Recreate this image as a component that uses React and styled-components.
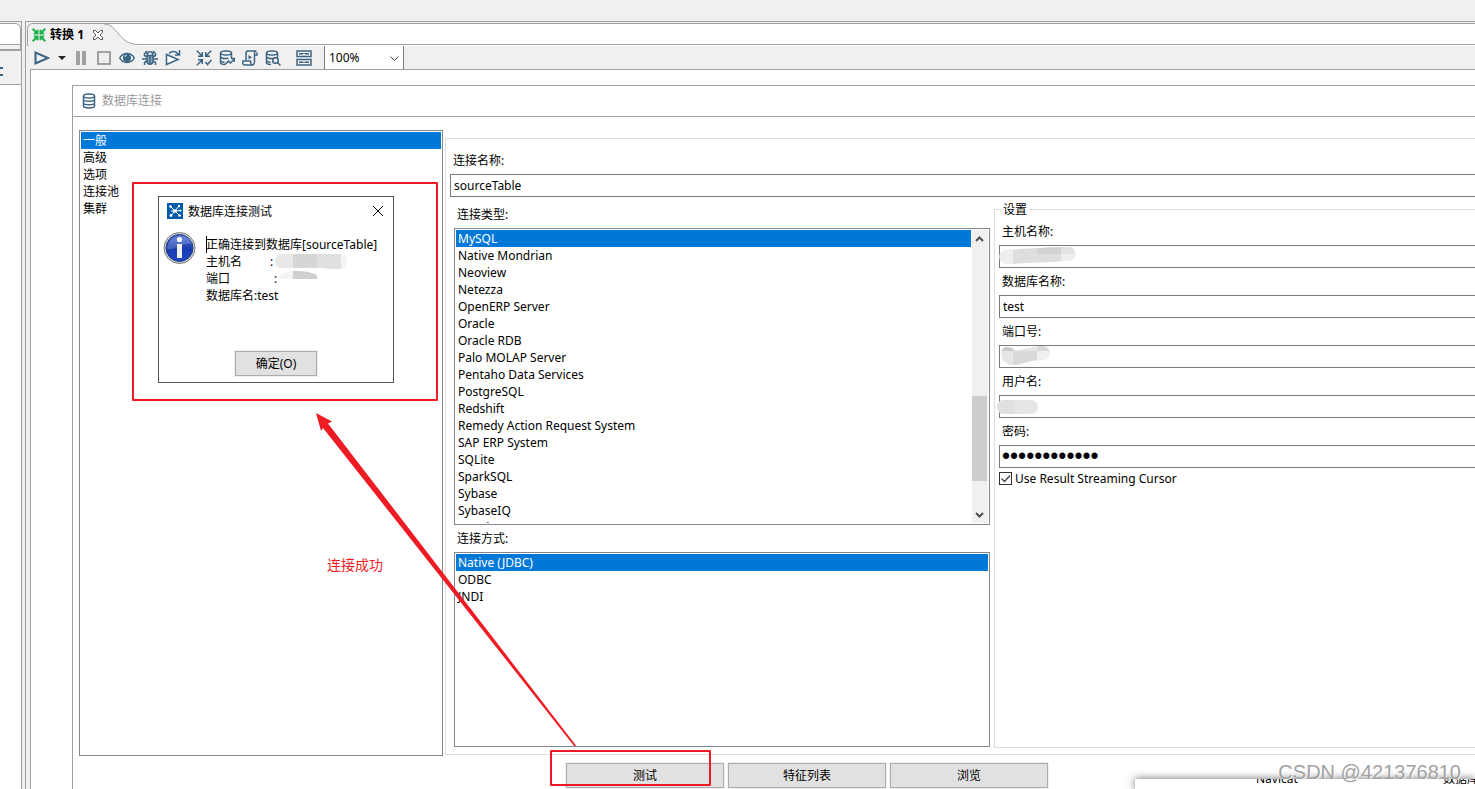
import React from 'react';
import styled, { createGlobalStyle } from 'styled-components';

const line = '#a0a0a0';
const frame = '#828790';
const ink = '#3b6482';
const red = '#ed1c24';

const Global = createGlobalStyle`
  * { box-sizing: border-box; }
  body {
    margin: 0;
    background: #fff;
    color: #000;
    overflow: hidden;
    font: 12px/17px "Noto Sans", "Noto Sans CJK SC", sans-serif;
  }
  button, input, select { font: inherit; color: inherit; }
`;

const Page = styled.div`
  position: relative;
  display: flex;
  flex-direction: column;
  height: 100vh;
  overflow: hidden;
`;
const TopStrip = styled.div`
  flex: 0 0 21px;
  background: #f0f0f0;
`;
const Workbench = styled.div`
  flex: 1;
  min-height: 0;
  display: flex;
  gap: 3px;
  background: #f0f0f0;
`;
const SidePane = styled.aside`
  flex: 0 0 22px;
  display: flex;
  flex-direction: column;
  border: solid ${line};
  border-width: 1px 1px 0 0;
`;
const SideTab = styled.div`
  height: 22px;
  margin: 1px 0 0;
  background: #fff;
  border: solid ${line};
  border-width: 1px 1px 1px 0;
  border-top-right-radius: 6px;
`;
const SideRule = styled.div`
  height: 6px;
  border: solid ${line};
  border-width: 0 1px 2px 0;
`;
const SideTools = styled.div`
  height: 34px;
  padding-top: 12px;
  border-bottom: 1px solid ${line};
`;
const SideBody = styled.div`
  flex: 1;
  background: #fff;
`;
const Editor = styled.main`
  flex: 1;
  min-width: 0;
  display: flex;
  flex-direction: column;
  border: solid ${line};
  border-width: 1px 0 0 1px;
`;
const TabBar = styled.div`
  display: flex;
  height: 23px;
  margin: 1px 0 0 1px;
  background: #fff;
  border: solid ${line};
  border-width: 1px 0 0 1px;
  border-top-left-radius: 6px;
`;
const Tab = styled.div`
  display: flex;
  align-items: center;
  width: 76px;
  padding: 0 0 1px 4px;
  gap: 4px;
  background: #f0f0f0;
  font-weight: bold;
  white-space: nowrap;
  border-top-left-radius: 6px;
`;
const TabCurve = styled.svg`
  flex: 0 0 34px;
  height: 22px;
`;
const TabRest = styled.div`
  flex: 1;
  height: 21px;
  border-bottom: 1px solid ${line};
`;
const CloseTab = styled.button`
  display: flex;
  border: 0;
  padding: 0;
  margin-left: 4px;
  background: none;
`;
const Toolbar = styled.div`
  display: flex;
  align-items: center;
  height: 23px;
  padding-left: 8px;
  gap: 7px;
`;
const ToolGroup = styled.div`
  display: flex;
  align-items: center;
  gap: 7px;
  margin-right: 8px;
`;
const ToolButton = styled.button`
  display: flex;
  padding: 0;
  border: 0;
  background: none;
`;
const ZoomBox = styled.div`
  position: relative;
  width: 80px;
  height: 23px;
  margin-left: -3px;
  border: solid #7a7a7a;
  border-width: 0 1px;
  background: #fff;
`;
const ZoomSelect = styled.select`
  appearance: none;
  width: 100%;
  height: 100%;
  padding: 0 4px;
  border: 0;
  outline: 0;
  background: none;
`;
const ZoomArrow = styled.svg`
  position: absolute;
  right: 4px;
  top: 10px;
  pointer-events: none;
`;
const Canvas = styled.div`
  flex: 1;
  min-height: 0;
  display: flex;
  margin-left: 4px;
  padding: 15px 0 0 41px;
  border: solid ${line};
  border-width: 1px 0 0 1px;
  background: #fff;
`;
const Dialog = styled.section`
  flex: 1;
  min-width: 0;
  display: flex;
  flex-direction: column;
  border: solid ${line};
  border-width: 1px 0 0 1px;
`;
const DialogTitle = styled.header`
  display: flex;
  align-items: center;
  gap: 5px;
  height: 31px;
  padding: 0 0 1px 8px;
  border-bottom: 1px solid ${line};
  color: #999;
`;
const DialogBody = styled.div`
  flex: 1;
  min-height: 0;
  display: flex;
  gap: 2px;
  padding: 13px 0 0 6px;
`;
const ListFrame = styled.div`
  display: flex;
  flex: ${(p) => p.$flex || '1'};
  min-height: 0;
  padding: 1px;
  border: 1px solid ${frame};
  background: #fff;
  overflow: hidden;
`;
const List = styled.ul`
  flex: 1;
  margin: 0;
  padding: 0;
  list-style: none;
  overflow: hidden;
`;
const Item = styled.li`
  height: 17px;
  padding-left: 2px;
  white-space: nowrap;
  background: ${(p) => (p.$selected ? '#0078d7' : 'transparent')};
  color: ${(p) => (p.$selected ? '#fff' : '#000')};
`;
const ScrollBar = styled.div`
  flex: 0 0 16px;
  margin-left: 1px;
  display: flex;
  flex-direction: column;
  align-items: center;
  justify-content: space-between;
  background: #f0f0f0;
`;
const Track = styled.div`
  flex: 1;
  width: 100%;
  padding-top: 149px;
`;
const Thumb = styled.div`
  width: 15px;
  height: 85px;
  background: #cdcdcd;
`;
const ArrowCap = styled.svg`
  flex: 0 0 17px;
  width: 15px;
  align-self: flex-start;
`;
const Panel = styled.div`
  flex: 1;
  min-width: 0;
  display: flex;
  flex-direction: column;
  margin: 8px 0 1px;
  padding: 13px 0 6px 4px;
  border: solid #dcdcdc;
  border-width: 1px 0 1px 1px;
`;
const Label = styled.label`
  display: block;
  flex: 0 0 17px;
  padding-left: 3px;
  margin-bottom: 5px;
`;
const TextInput = styled.input`
  display: block;
  width: 100%;
  height: 23px;
  padding: 0 3px;
  border: 1px solid #7a7a7a;
  border-right: 0;
  border-radius: 0;
  outline: 0;
  background: #fff;
`;
const PasswordInput = styled(TextInput)`
  font-family: "Liberation Sans", Arial, sans-serif;
  font-size: 23px;
  padding: 0 2px;
`;
const Columns = styled.div`
  flex: 1;
  min-height: 0;
  display: flex;
  gap: 4px;
  padding-left: 4px;
`;
const TypeColumn = styled.div`
  flex: 0 0 536px;
  display: flex;
  flex-direction: column;
  padding-top: 9px;
  margin-bottom: 1px;
`;
const SecondLabel = styled(Label)`
  margin-top: 5px;
`;
const Settings = styled.fieldset`
  flex: 1;
  min-width: 0;
  margin: 4px 0 0;
  padding: 5px 0 0 4px;
  border: 1px solid #dcdcdc;
  border-right: 0;
`;
const Legend = styled.legend`
  height: 17px;
  margin-left: 2px;
  padding: 0 2px;
`;
const Field = styled.div`
  position: relative;
  margin-bottom: 5px;
`;
const Smudge = styled.svg`
  position: absolute;
  left: -2px;
  bottom: 0;
`;
const CheckRow = styled.label`
  display: flex;
  align-items: center;
  gap: 3px;
  height: 17px;
  margin-top: -3px;
`;
const CheckBox = styled.span`
  display: flex;
  position: relative;
`;
const Check = styled.input`
  appearance: none;
  width: 13px;
  height: 13px;
  margin: 0;
  border: 1px solid #333;
  background: #fff;
  &:not(:checked) + svg { display: none; }
`;
const CheckMark = styled.svg`
  position: absolute;
  left: 0;
  top: 0;
  pointer-events: none;
`;
const ButtonRow = styled.footer`
  display: flex;
  gap: 4px;
  padding: 7px 0 1px 493px;
`;
const PushButton = styled.button`
  width: ${(p) => p.$width || 158}px;
  height: 25px;
  padding: 0;
  border: 1px solid #adadad;
  background: #e1e1e1;
  box-shadow: 0 0 0 1px #f0f0f0;
`;

const MessageBox = styled.section`
  position: absolute;
  left: 158px;
  top: 196px;
  width: 236px;
  height: 187px;
  display: flex;
  flex-direction: column;
  align-items: center;
  border: 1px solid #555;
  background: #fff;
`;
const MessageTitle = styled.header`
  align-self: stretch;
  display: flex;
  align-items: center;
  gap: 5px;
  height: 28px;
  padding: 0 9px 0 8px;
`;
const CloseBox = styled.button`
  display: flex;
  margin-left: auto;
  padding: 0;
  border: 0;
  background: none;
`;
const MessageBody = styled.div`
  align-self: stretch;
  flex: 1;
  display: flex;
  gap: 10px;
  padding: 7px 0 0 4px;
`;
const MessageText = styled.div`
  padding-top: 4px;
  white-space: nowrap;
`;
const Row = styled.div`
  position: relative;
  display: flex;
  height: 17px;
`;
const Caret = styled.i`
  position: absolute;
  left: 0;
  top: 0;
  width: 1px;
  height: 17px;
  background: #000;
`;
const Key = styled.span`
  width: ${(p) => p.$width}px;
`;
const MessageActions = styled.div`
  padding-bottom: 6px;
`;
const Mark = styled.div`
  position: absolute;
  left: ${(p) => p.$x}px;
  top: ${(p) => p.$y}px;
  width: ${(p) => p.$w}px;
  height: ${(p) => p.$h}px;
  border: 2px solid ${red};
  border-radius: 1px;
  pointer-events: none;
`;
const Arrow = styled.svg`
  position: absolute;
  left: 310px;
  top: 405px;
  pointer-events: none;
`;
const Note = styled.div`
  position: absolute;
  left: 327px;
  top: 556px;
  font-size: 14px;
  color: ${red};
`;
const Popup = styled.div`
  position: absolute;
  left: 1135px;
  right: 0;
  bottom: 0;
  height: 10px;
  background: #fff;
  box-shadow: 0 0 8px rgba(0, 0, 0, 0.6);
`;
const PopupRow = styled.div`
  display: flex;
  justify-content: space-between;
  height: 10px;
  padding-left: 121px;
  overflow: hidden;
  line-height: 0;
  white-space: nowrap;
`;
const PopupText = styled.span`
  width: ${(p) => p.$width || 'auto'};
`;
const Watermark = styled.div`
  position: absolute;
  right: 14px;
  bottom: 5px;
  font: 20px/24px "Liberation Sans", Arial, sans-serif;
  color: #a2a2a2;
  text-shadow: 1px 1px 0 rgba(255, 255, 255, 0.7);
`;

function Icon({ children, width = 16, stroke = ink, sw = 1.5 }) {
  return (
    <svg width={width} height="16" viewBox={`0 0 ${width} 16`} fill="none" stroke={stroke} strokeWidth={sw}>
      {children}
    </svg>
  );
}
const Converge = ({ d }) => (
  <>
    <path d="M2 6.300h4.300V2M6.300 6.300L.8.8M9.700 2v4.300H14M9.700 6.300L15.200.8M2 9.700h4.300V14M6.300 9.700L.8 15.200" />
    <path d={d} />
  </>
);
const Cylinder = ({ open }) => (
  <>
    <ellipse cx="7" cy="3" rx="5.500" ry="2" />
    <path d={open ? 'M1.500 3v9.500c0 1.200 2 2 4.500 2M12.500 3v5M1.500 7c1 1.500 5 2 8 1.300M1.500 11c1 1 2.500 1.300 4 1.500' : 'M1.500 3v10c0 2.500 11 2.500 11 0V3M1.500 6.500c0 2.300 11 2.300 11 0M1.500 10c0 2.300 11 2.300 11 0'} />
  </>
);

const run = [
  ['运行', <Icon sw={2}><path d="M1.500 2.500v11L14 8z" /></Icon>],
  ['运行选项', <Icon width={9} stroke="none"><path d="M1 6h8L5 10z" fill="#222" /></Icon>],
  ['暂停', <Icon stroke="none"><path d="M3 1h4v14H3zM9 1h4v14H9z" fill={line} /></Icon>],
  ['停止', <Icon stroke={line} sw={2}><path d="M2 2h12v12H2z" /></Icon>],
  ['预览', <Icon sw={1.5}><path d="M.7 8C4 2 12 2 15.300 8 12 14 4 14 .7 8z" fill="#fff" /><circle cx="8" cy="8" r="4.200" fill={ink} stroke="none" /><path d="M6 7a2 2 0 0 1 2-2" stroke="#cfdce5" strokeWidth="1" /></Icon>],
  ['调试', <Icon><path d="M5 5.500h6v5c0 5-6 5-6 0z" fill="#8ba3b5" /><path d="M8 5.500v8M5.500 5V3.500C6 1 10 1 10.500 3.500V5M5 1L3.500 2.500 5.500 4M11 1l1.500 1.500L10.500 4M5 7L2.500 5.500V3M5 9H0M5 11l-2.500 1.500V15M11 7l2.500-1.500V3M11 9h5M11 11l2.500 1.500V15" /></Icon>],
  ['重放', <Icon><path d="M1.500 4.500v10L13 9.500z" fill="#fff" /><path d="M4 3.500C7 .5 11 1 13.500 4.500M14.500 0v5H10" /></Icon>],
];
const tools = [
  ['校验', <Icon><Converge d="M9.500 12l2 2.500L15.500 10" /></Icon>],
  ['影响分析', <Icon><Cylinder open /><path d="M6 14.500l3.500-3.500 2 2L15.500 9M12 8.500h3.500V12" /></Icon>],
  ['SQL', <Icon><path d="M4 10V3.500C4 1 5 1 6 1h8.500c-2 0-2 1-2 3v7c0 3-1 4-2.500 4H2.500C1 15 .5 13 1 11h7.500c0 2.500.5 4 2 4M12.500 5H15V2.500" /><path d="M6.500 5v4.500L10 7.200z" fill={ink} stroke="none" /></Icon>],
  ['浏览数据库', <Icon><Cylinder open /><circle cx="10.500" cy="10.500" r="2.800" /><path d="M12.500 12.500l3 3" /></Icon>],
];

const types = ['MySQL', 'Native Mondrian', 'Neoview', 'Netezza', 'OpenERP Server', 'Oracle', 'Oracle RDB', 'Palo MOLAP Server', 'Pentaho Data Services', 'PostgreSQL', 'Redshift', 'Remedy Action Request System', 'SAP ERP System', 'SQLite', 'SparkSQL', 'Sybase', 'SybaseIQ', 'Teradata'];

function ListBox({ items, label, flex, scroll }) {
  return (
    <ListFrame $flex={flex}>
      <List role="listbox" aria-label={label}>
        {items.map((t, i) => (
          <Item key={t} role="option" aria-selected={i === 0} $selected={i === 0}>{t}</Item>
        ))}
      </List>
      {scroll && (
        <ScrollBar>
          <ArrowCap viewBox="0 0 15 17" fill="none" stroke="#505050" strokeWidth="2"><path d="M4 11l3.500-3.500L11 11" /></ArrowCap>
          <Track><Thumb /></Track>
          <ArrowCap viewBox="0 0 15 17" fill="none" stroke="#505050" strokeWidth="2"><path d="M4 7l3.500 3.500L11 7" /></ArrowCap>
        </ScrollBar>
      )}
    </ListFrame>
  );
}

const hostSmudge = (
  <Smudge width="80" height="23">
    <clipPath id="hostShape"><path d="M8 5C20 4 60 2 71 2c10 0 10 14 0 14C58 17 25 18 10 19 0 19 0 6 8 5z" /></clipPath>
    <g clipPath="url(#hostShape)">
      <path fill="#eee" d="M0 0h80v20H0z" /><path fill="#dedede" d="M16 0h48v20H16z" />
      <path fill="#d2d2d2" d="M40 0h24v9H40z" /><path fill="#e2e2e2" d="M64 0h16v9H64z" />
    </g>
  </Smudge>
);
const portSmudge = (
  <Smudge width="60" height="23">
    <clipPath id="portShape"><path d="M10 2c5 0 8 4 12 3 8-1 14-4 23-4 10 0 11 14 0 14-7 0-12 1-18 3-6 2-12 3-16 1C2 16 2 2 10 2z" /></clipPath>
    <g clipPath="url(#portShape)">
      <path fill="#e6e6e6" d="M0 0h60v23H0z" /><path fill="#c8c8c8" d="M0 0h16v6H0z" />
      <path fill="#d9d9d9" d="M16 6h24v17H16z" /><path fill="#d8dbdb" d="M40 0h20v6H40z" /><path fill="#efefef" d="M40 6h20v17H40z" />
    </g>
  </Smudge>
);
const userSmudge = (
  <Smudge width="44" height="23">
    <rect x="0" y="5" width="41" height="14" rx="7" fill="#e6e6e6" /><path fill="#e1e0df" d="M7 5h10v14H7C-2 19-2 5 7 5z" />
  </Smudge>
);

const fields = [
  ['host', '主机名称:', '', hostSmudge],
  ['db', '数据库名称:', 'test'],
  ['port', '端口号:', '', portSmudge],
  ['user', '用户名:', '', userSmudge],
];

export default function App() {
  return (
    <Page>
      <Global />
      <TopStrip />
      <Workbench>
        <SidePane>
          <SideTab />
          <SideRule />
          <SideTools>
            <svg width="4" height="10" fill="none" stroke={ink} strokeWidth="2"><path d="M0 2h3M0 9h3" /></svg>
          </SideTools>
          <SideBody />
        </SidePane>
        <Editor>
          <TabBar>
            <Tab>
              <Icon stroke="#1fb14c" sw={2.3}><Converge d="M14 9.700H9.700V14M9.700 9.700L15.200 15.200" /></Icon>
              转换 1
              <CloseTab aria-label="关闭">
                <svg width="12" height="12" viewBox="0 0 12 12" fill="#fff" stroke="#555"><path d="M1.500 1.500h2L6 4l2.500-2.500h2v2L8 6l2.500 2.500v2h-2L6 8l-2.500 2.500h-2v-2L4 6 1.500 3.500z" /></svg>
              </CloseTab>
            </Tab>
            <TabCurve viewBox="0 0 34 22">
              <path d="M0 0C14 0 14 20 34 20.500V22H0z" fill="#f0f0f0" />
              <path d="M0 0C14 0 14 20 34 20.500" fill="none" stroke={line} />
            </TabCurve>
            <TabRest />
          </TabBar>
          <Toolbar>
            <ToolGroup>{run.map(([n, i]) => <ToolButton key={n} aria-label={n}>{i}</ToolButton>)}</ToolGroup>
            <ToolGroup>{tools.map(([n, i]) => <ToolButton key={n} aria-label={n}>{i}</ToolButton>)}</ToolGroup>
            <ToolGroup>
              <ToolButton aria-label="显示结果">
                <Icon width={16}><path d="M1 1h14v5.500H1zM1 9.500h14V15H1zM3 3.700h4.500M8.500 3.700H13M3 12.300h4.500M8.500 12.300H13" /></Icon>
              </ToolButton>
            </ToolGroup>
            <ZoomBox>
              <ZoomSelect aria-label="缩放" defaultValue="100%"><option>100%</option></ZoomSelect>
              <ZoomArrow width="9" height="6" fill="none" stroke="#444"><path d="M.5.5l4 4 4-4" /></ZoomArrow>
            </ZoomBox>
          </Toolbar>
          <Canvas>
            <Dialog>
              <DialogTitle>
                <Icon><g transform="translate(1 0)"><Cylinder /></g></Icon>
                数据库连接
              </DialogTitle>
              <DialogBody>
                <ListBox flex="0 0 364px" label="分类" items={['一般', '高级', '选项', '连接池', '集群']} />
                <Panel>
                  <Label htmlFor="name">连接名称:</Label>
                  <TextInput id="name" defaultValue="sourceTable" />
                  <Columns>
                    <TypeColumn>
                      <Label as="div">连接类型:</Label>
                      <ListBox flex="0 0 297px" label="连接类型" items={types} scroll />
                      <SecondLabel as="div">连接方式:</SecondLabel>
                      <ListBox label="连接方式" items={['Native (JDBC)', 'ODBC', 'JNDI']} />
                    </TypeColumn>
                    <Settings>
                      <Legend>设置</Legend>
                      {fields.map(([id, text, value, smudge]) => (
                        <Field key={id}>
                          <Label htmlFor={id}>{text}</Label>
                          <TextInput id={id} defaultValue={value} />
                          {smudge}
                        </Field>
                      ))}
                      <Field>
                        <Label htmlFor="pwd">密码:</Label>
                        <PasswordInput id="pwd" type="password" defaultValue="123456789012" />
                      </Field>
                      <CheckRow>
                        <CheckBox>
                          <Check type="checkbox" defaultChecked />
                          <CheckMark width="13" height="13" fill="none" stroke="#444" strokeWidth="1.3"><path d="M2.500 6.500l3 3 5.500-6" /></CheckMark>
                        </CheckBox>
                        Use Result Streaming Cursor
                      </CheckRow>
                    </Settings>
                  </Columns>
                </Panel>
              </DialogBody>
              <ButtonRow>
                <PushButton>测试</PushButton>
                <PushButton>特征列表</PushButton>
                <PushButton>浏览</PushButton>
              </ButtonRow>
            </Dialog>
          </Canvas>
        </Editor>
      </Workbench>

      <MessageBox role="dialog" aria-label="数据库连接测试">
        <MessageTitle>
          <svg width="16" height="16" viewBox="0 0 16 16" stroke="#fff" fill="#fff">
            <rect width="16" height="16" fill="#005ca9" stroke="none" />
            <path d="M8 8L3.500 3.500M8 8l4-5M8 8l5.500-.5M8 8l4.500 4.500M8 8l-4 4.500M8 8L4 8" />
            <g stroke="none"><circle cx="3.500" cy="3.500" r="1.300" /><circle cx="12" cy="3" r="1.200" /><circle cx="13.500" cy="7.500" r="1" /><circle cx="12.500" cy="12.500" r="1.300" /><circle cx="4" cy="12.500" r="1.400" /><circle cx="8" cy="8" r="1.800" /></g>
          </svg>
          数据库连接测试
          <CloseBox aria-label="关闭">
            <svg width="12" height="12" fill="none" stroke="#000"><path d="M1 1l10 10M11 1L1 11" /></svg>
          </CloseBox>
        </MessageTitle>
        <MessageBody>
          <svg width="33" height="33" viewBox="0 0 33 33">
            <defs>
              <linearGradient id="ball" x1="0" y1="0" x2="0" y2="1"><stop offset="0" stopColor="#4f78d8" /><stop offset=".5" stopColor="#1b3cae" /><stop offset="1" stopColor="#1f49c8" /></linearGradient>
            </defs>
            <circle cx="16.500" cy="16" r="15.500" fill="#dcdcdc" stroke="#777" />
            <circle cx="16.500" cy="16" r="13.500" fill="url(#ball)" stroke="#22347e" />
            <path d="M4 17C5 1 28 1 29 12 20 10 10 19 4 17z" fill="#fff" opacity=".18" />
            <circle cx="16.500" cy="7.500" r="2.600" fill="#fff" />
            <path d="M14 12h5v14h-5z" fill="#f1f1f1" />
          </svg>
          <MessageText>
            <Row><Caret />正确连接到数据库[sourceTable]</Row>
            <Row>
              <Key $width={64}>主机名</Key>:
              <svg width="76" height="17" viewBox="0 0 76 17">
                <clipPath id="nameShape"><path d="M9 1h58c9 0 9 14 0 15-8 1-12-1-20-1H9C0 15 0 1 9 1z" /></clipPath>
                <g clipPath="url(#nameShape)"><path fill="#e8e8e8" d="M0 0h20v17H0z" /><path fill="#d5d7d7" d="M20 0h24v17H20z" /><path fill="#e1dfdf" d="M44 0h24v17H44z" /><path fill="#f3f3f3" d="M68 0h8v17h-8z" /></g>
              </svg>
            </Row>
            <Row>
              <Key $width={68}>端口</Key>:
              <svg width="42" height="9" viewBox="0 0 42 9"><path fill="#f4f4f4" d="M1 9C4 3 10 1 16 1v8z" /><path fill="#cfcfd1" d="M16 1c8 0 16 0 24 4v4H16z" /></svg>
            </Row>
            <Row>数据库名:test</Row>
          </MessageText>
        </MessageBody>
        <MessageActions><PushButton $width={82}>确定(O)</PushButton></MessageActions>
      </MessageBox>

      <Mark $x={132} $y={182} $w={306} $h={219} />
      <Mark $x={550} $y={750} $w={161} $h={36} />
      <Arrow width="270" height="345" fill={red}>
        <path d="M6 8L22 16.500 18 18.500 266 340.500 264.500 341.500 13 23 11 26z" />
      </Arrow>
      <Note>连接成功</Note>

      <Popup>
        <PopupRow>
          <PopupText>Navicat</PopupText>
          <PopupText $width="32px">数据库</PopupText>
        </PopupRow>
      </Popup>
      <Watermark>CSDN @421376810</Watermark>
    </Page>
  );
}
